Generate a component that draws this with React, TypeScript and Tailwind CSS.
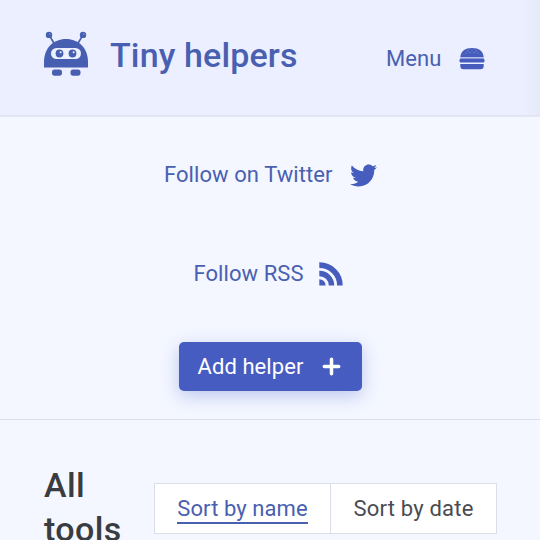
import React from "react";
import { FaTwitter } from "react-icons/fa";

function Robot() {
  return (
    <svg className="h-[45px] w-[46px] shrink-0" viewBox="0 0 46 45" fill="#465fb0">
      <circle cx="6" cy="3.900" r="3.200" />
      <circle cx="40" cy="3.900" r="3.200" />
      <circle cx="6.800" cy="3" r=".6" fill="#b9c6ee" />
      <circle cx="40.800" cy="3" r=".6" fill="#b9c6ee" />
      <path d="M6 4 11.500 13M40 4 34.500 13" stroke="#465fb0" strokeWidth="1.600" />
      <path d="M1 36.500V31C1 17 10.500 8 23 8s22 9 22 23v5.500z" />
      <rect x="8" y="17" width="30" height="11" rx="5.500" fill="#edf1ff" />
      <circle cx="16.500" cy="22.500" r="3.900" />
      <circle cx="29.500" cy="22.500" r="3.900" />
      <circle cx="17.600" cy="21.200" r="1" fill="#edf1ff" />
      <circle cx="30.600" cy="21.200" r="1" fill="#edf1ff" />
      <rect x="9" y="38.500" width="10" height="6.200" rx="2.600" />
      <rect x="27.500" y="38.500" width="10" height="6.200" rx="2.600" />
    </svg>
  );
}

function Burger() {
  return (
    <svg className="h-[23px] w-[26px] shrink-0" viewBox="0 0 26 23" fill="#465dbd">
      <path d="M1.300 10C2 4 6 1 13 1S24 4 24.700 10z" />
      <rect x="1" y="10" width="24" height="1.500" fill="#b3bfeb" />
      <rect x="0.500" y="11.500" width="25" height="4" rx="1.500" />
      <path d="M1.300 17h23.400v2q0 3.200-3.200 3.200h-17q-3.200 0-3.200-3.200z" />
      <g fill="#9babe4">
        <circle cx="9" cy="4" r=".5" /><circle cx="13" cy="2.900" r=".5" />
        <circle cx="17" cy="4" r=".5" /><circle cx="11" cy="5.500" r=".5" />
        <circle cx="15" cy="5.500" r=".5" /><circle cx="7" cy="6" r=".5" />
        <circle cx="19" cy="6" r=".5" />
      </g>
    </svg>
  );
}

function Rss() {
  return (
    <svg className="h-6 w-6 shrink-0" viewBox="0 0 24 24" fill="none" stroke="#465dbd">
      <path d="M.3 3.100A20.400 20.400 0 0 1 20.900 23.500" strokeWidth="5.600" />
      <path d="M.3 11.500A12 12 0 0 1 12.500 23.500" strokeWidth="5.400" />
      <path d="M.3 17.200A6.300 6.300 0 0 1 6.600 23.500H.3z" fill="#465dbd" stroke="none" />
    </svg>
  );
}

export default function App() {
  return (
    <div className="h-[540px] w-[540px] overflow-hidden bg-[#f4f7ff] font-['Roboto',sans-serif] text-[22px] leading-[26px] tracking-[0.07px] text-[#4960b1]">
      <header className="flex h-[116px] items-start border-b border-[#dfe3ef] bg-[#ecefff] bg-[linear-gradient(to_right,transparent_520px,#e6eaf8_540px)] pl-[43px] shadow-[0_1px_1px_#e6eaf6]">
        <div className="flex pt-[31px]">
          <Robot />
          <h1 className="ml-[21px] mt-[2px] w-[188px] whitespace-nowrap text-[34px] font-medium leading-[44px] tracking-[0.13px]">Tiny helpers</h1>
        </div>
        <button className="ml-[88px] mt-[45px] flex items-center text-left">
          <span className="w-[73px] pt-px">Menu</span>
          <Burger />
        </button>
      </header>
      <nav className="flex h-[304px] flex-col items-center border-b border-[#d9deea]">
        <a className="mt-[45px] flex h-[27px] w-[212px] items-center justify-between">
          <span className="whitespace-nowrap">Follow on Twitter</span>
          <FaTwitter className="h-[27px] w-[27px] translate-x-px translate-y-px text-[#465dbd]" />
        </a>
        <a className="mt-[72px] flex h-[27px] w-[151px] -translate-x-px items-center justify-between pr-[2px]">
          <span className="whitespace-nowrap">Follow RSS</span>
          <Rss />
        </a>
        <button className="mt-[55px] flex h-[49px] w-[183px] items-center justify-between rounded-[5px] bg-[#465cc1] pl-[19px] pr-[21px] text-white shadow-[0_5px_18px_#bcc6ee]">
          <span className="whitespace-nowrap pt-px">Add helper</span>
          <svg className="h-[19px] w-[19px]" viewBox="0 0 19 19" stroke="white" strokeWidth="3.500" strokeLinecap="round"><path d="M2.300 9.500h14.400M9.500 2.300v14.400" /></svg>
        </button>
      </nav>
      <main className="flex items-start pl-[44px]">
        <h2 className="mt-[43px] w-[110px] text-[34px] font-medium leading-[44px] tracking-[0.4px] text-[#393c40]">All<br />tools</h2>
        <div className="mt-[63px] flex h-[51px] w-[343px] border border-[#d9deea] bg-white">
          <button className="flex w-[176px] items-center justify-center border-r border-[#d9deea]"><span className="whitespace-nowrap border-b-2 border-[#4960b1] pt-[3px] leading-[26px]">Sort by name</span></button>
          <button className="flex flex-1 items-center justify-center whitespace-nowrap tracking-[0.2px] text-[#494c51]">Sort by date</button>
        </div>
      </main>
    </div>
  );
}
